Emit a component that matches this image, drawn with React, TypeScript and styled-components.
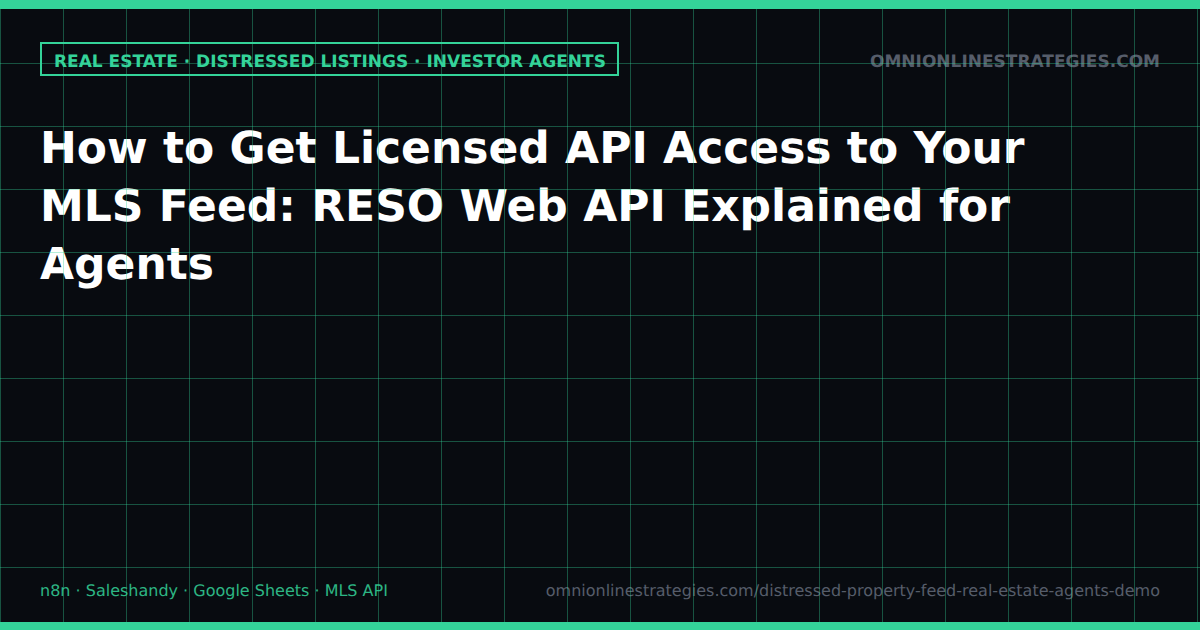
import React from "react";
import styled, { createGlobalStyle } from "styled-components";

const GlobalStyle = createGlobalStyle`
  html, body {
    margin: 0;
    padding: 0;
    background: #080b10;
  }
`;

const Card = styled.div`
  position: relative;
  width: 1200px;
  height: 630px;
  box-sizing: border-box;
  display: flex;
  flex-direction: column;
  overflow: hidden;
  font-family: "DejaVu Sans", sans-serif;
  text-rendering: geometricPrecision;
  background-color: #080b10;

  /* grid sits over the text */
  &::after {
    content: "";
    position: absolute;
    inset: 0;
    pointer-events: none;
    background-image:
      linear-gradient(rgba(52, 211, 153, 0.36) 1px, transparent 1px),
      linear-gradient(90deg, rgba(52, 211, 153, 0.36) 1px, transparent 1px);
    background-size: 63px 63px;
  }
`;

const Bar = styled.div<{ $height: number }>`
  position: relative;
  z-index: 1;
  height: ${(p) => p.$height}px;
  flex: none;
  background: #34d399;
`;

const Body = styled.div`
  flex: 1;
  display: flex;
  flex-direction: column;
  padding: 33px 40px 22px;
`;

const TopRow = styled.div`
  display: flex;
  justify-content: space-between;
  align-items: center;
`;

const Tag = styled.div`
  border: 2px solid #34d399;
  padding: 8px 11px 2px 12px;
  color: #34d399;
  font-size: 17px;
  font-weight: 700;
  line-height: 20px;
`;

const Site = styled.div`
  margin-top: 6px;
  color: #565d6a;
  font-size: 17px;
  font-weight: 700;
`;

const Title = styled.h1`
  margin: 44px 0 0;
  max-width: 1080px;
  color: #ffffff;
  font-size: 44px;
  font-weight: 700;
  line-height: 58px;
`;

const Footer = styled.div`
  margin-top: auto;
  display: flex;
  justify-content: space-between;
  align-items: center;
  font-size: 16px;
  line-height: 19px;
`;

const Stack = styled.span`
  color: #34d399;
  opacity: 0.85;
`;

const Url = styled.span`
  color: #565d6a;
`;

export default function App() {
  return (
    <>
      <GlobalStyle />
      <Card>
        <Bar $height={9} />
        <Body>
          <TopRow>
            <Tag>REAL ESTATE · DISTRESSED LISTINGS · INVESTOR AGENTS</Tag>
            <Site>OMNIONLINESTRATEGIES.COM</Site>
          </TopRow>
          <Title>
            How to Get Licensed API Access to Your MLS Feed: RESO Web API
            Explained for Agents
          </Title>
          <Footer>
            <Stack>n8n · Saleshandy · Google Sheets · MLS API</Stack>
            <Url>omnionlinestrategies.com/distressed-property-feed-real-estate-agents-demo</Url>
          </Footer>
        </Body>
        <Bar $height={8} />
      </Card>
    </>
  );
}
